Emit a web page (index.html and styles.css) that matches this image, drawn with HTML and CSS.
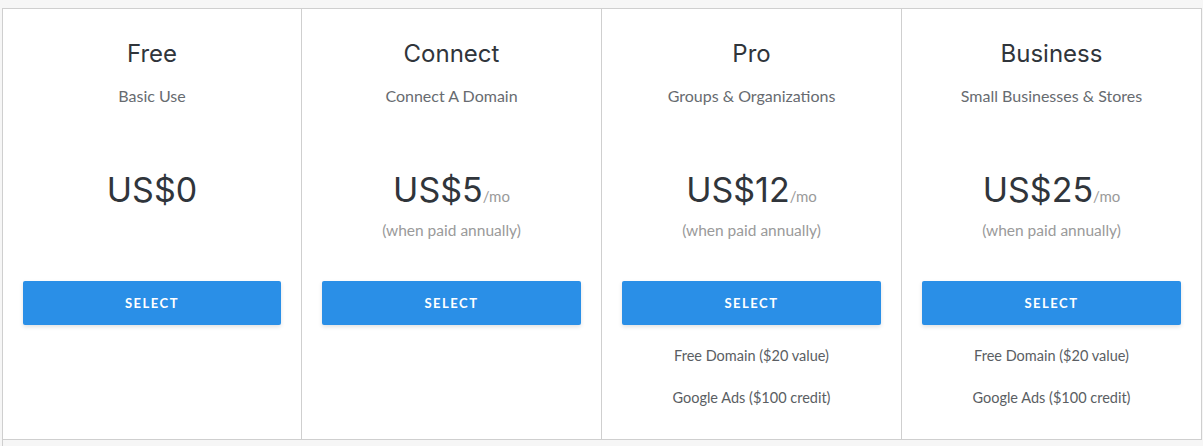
FILE: index.html
```html
<!DOCTYPE html>
<html>
<head>
<meta charset="utf-8">
<link rel="stylesheet" href="styles.css">
</head>
<body>
<div class="plans">
  <div class="plan">
    <h2 class="plan-name">Free</h2>
    <p class="plan-desc">Basic Use</p>
    <div class="price-block">
      <div class="price">US$0</div>
    </div>
    <button class="select">SELECT</button>
  </div>
  <div class="plan">
    <h2 class="plan-name">Connect</h2>
    <p class="plan-desc">Connect A Domain</p>
    <div class="price-block">
      <div class="price">US$5<span class="per">/mo</span></div>
      <div class="annual">(when paid annually)</div>
    </div>
    <button class="select">SELECT</button>
  </div>
  <div class="plan">
    <h2 class="plan-name">Pro</h2>
    <p class="plan-desc">Groups &amp; Organizations</p>
    <div class="price-block">
      <div class="price">US$12<span class="per">/mo</span></div>
      <div class="annual">(when paid annually)</div>
    </div>
    <button class="select">SELECT</button>
    <ul class="features">
      <li>Free Domain ($20 value)</li>
      <li>Google Ads ($100 credit)</li>
    </ul>
  </div>
  <div class="plan">
    <h2 class="plan-name">Business</h2>
    <p class="plan-desc">Small Businesses &amp; Stores</p>
    <div class="price-block">
      <div class="price">US$25<span class="per">/mo</span></div>
      <div class="annual">(when paid annually)</div>
    </div>
    <button class="select">SELECT</button>
    <ul class="features">
      <li>Free Domain ($20 value)</li>
      <li>Google Ads ($100 credit)</li>
    </ul>
  </div>
</div>
<div class="below"></div>
</body>
</html>
```

FILE: styles.css
```css
* { box-sizing: border-box; }

body {
  margin: 0;
  padding-top: 8px;
  background: #f6f6f6;
  font-family: "Lato", "Liberation Sans", sans-serif;
}

.plans {
  width: 1200px;
  margin-left: 2px;
  display: grid;
  grid-template-columns: 299px repeat(3, 300px);
  background: #fff;
  border-top: 1px solid #cfcfcf;
  border-bottom: 1px solid #cfcfcf;
  border-left: 1px solid #cfcfcf;
}

.plan {
  border-right: 1px solid #cfcfcf;
  padding: 30px 20px 31px;
  display: flex;
  flex-direction: column;
  align-items: stretch;
  text-align: center;
}

.plan-name {
  margin: 0;
  font-family: "Inter", "Noto Sans", sans-serif;
  font-weight: 400;
  font-size: 24px;
  line-height: 30px;
  color: #30353b;
}

.plan-desc {
  margin: 17px 0 0;
  font-size: 16px;
  line-height: 20px;
  color: #676b70;
}

.price-block {
  margin-top: 64px;
  height: 80px;
}

.price {
  font-family: "Inter", "Noto Sans", sans-serif;
  font-size: 34px;
  line-height: 40px;
  color: #30353b;
}

.per {
  font-family: "Lato", sans-serif;
  font-size: 15px;
  color: #9a9a9a;
}

.annual {
  margin-top: 4px;
  font-size: 15.5px;
  line-height: 20px;
  color: #9a9a9a;
}

.select {
  margin-top: 31px;
  height: 44px;
  border: none;
  border-radius: 2px;
  background: #2a8fe7;
  color: #fff;
  font-family: "Lato", sans-serif;
  font-weight: 700;
  font-size: 13px;
  letter-spacing: 1.5px;
  box-shadow: 0 2px 4px rgba(0,0,0,0.12);
}

.features {
  list-style: none;
  margin: 21px 0 0;
  padding: 0;
  display: flex;
  flex-direction: column;
  gap: 22px;
}

.features li {
  font-size: 14.5px;
  line-height: 20px;
  color: #5a5e63;
}

.below {
  margin-left: 2px;
  height: 10px;
  border-left: 1px solid #cfcfcf;
}
```
